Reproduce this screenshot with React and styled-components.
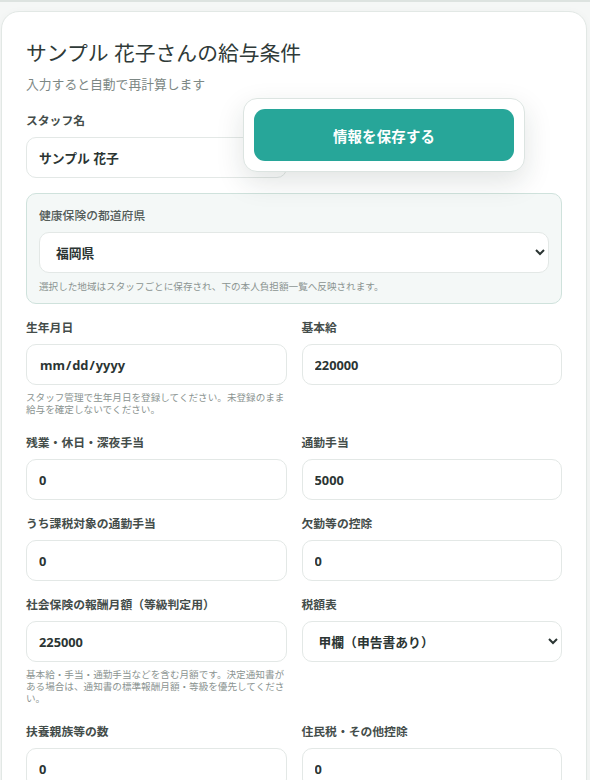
import React from "react";
import styled, { createGlobalStyle } from "styled-components";

const GlobalStyle = createGlobalStyle`
  html, body {
    margin: 0;
    padding: 0;
    background: #f5f7f6;
    font-family: "Noto Sans", "Noto Sans CJK JP", sans-serif;
    color: #2f3a38;
  }
  * { box-sizing: border-box; }
`;

const TopEdge = styled.div`
  height: 2px;
  background: #dde3e0;
`;

const Page = styled.div`
  padding: 9px 3px 0 1px;
`;

const Card = styled.section`
  background: #ffffff;
  border: 1px solid #e2e8e5;
  border-radius: 18px;
  padding: 28px 24px 40px;
  box-shadow: 0 2px 10px rgba(30, 60, 50, 0.04);
`;

const Title = styled.h2`
  margin: 0;
  font-size: 20.8px;
  line-height: 27px;
  font-weight: 400;
  color: #2f3a38;
`;

const Subtitle = styled.p`
  margin: 8px 0 0;
  font-size: 12.8px;
  line-height: 18px;
  color: #7c8784;
`;

const Grid = styled.div`
  display: grid;
  grid-template-columns: 1fr 1fr;
  column-gap: 15px;
  row-gap: 15px;
  margin-top: 19px;
`;

const Field = styled.div`
  display: flex;
  flex-direction: column;
  min-width: 0;
`;

const Label = styled.label`
  font-size: 11.8px;
  line-height: 17px;
  font-weight: ${(p) => (p.$light ? 500 : 700)};
  color: ${(p) => (p.$light ? "#535c59" : "#444d4a")};
  margin-bottom: 8px;
`;

const Input = styled.input`
  height: 41px;
  width: 100%;
  border: 1px solid #e3e8e6;
  border-radius: 10px;
  background: #ffffff;
  padding: 0 12px;
  font-family: inherit;
  font-size: 12.8px;
  font-weight: 700;
  color: #2b3533;
  outline: none;
  &::-webkit-calendar-picker-indicator {
    display: none;
  }
`;

const Select = styled.select`
  height: 41px;
  width: 100%;
  border: 1px solid #e3e8e6;
  border-radius: 10px;
  background-color: #ffffff;
  padding: 0 8px 0 12px;
  font-family: inherit;
  font-size: 12.8px;
  font-weight: 700;
  color: #2b3533;
  outline: none;
`;

const Help = styled.p`
  margin: ${(p) => (p.$boxed ? "8px 0 0" : "7px 0 3px")};
  font-size: 9.6px;
  line-height: 12px;
  color: #8b9491;
`;

const RegionBox = styled.div`
  grid-column: 1 / -1;
  display: flex;
  flex-direction: column;
  background: #f4f8f7;
  border: 1px solid #cfe2dc;
  border-radius: 10px;
  padding: 13px 12px 10px;
`;

const SaveBar = styled.div`
  position: fixed;
  left: 243px;
  top: 98px;
  width: 282px;
  padding: 10px;
  background: #ffffff;
  border: 1px solid #dce4e1;
  border-radius: 14px;
  box-shadow: 0 10px 28px rgba(20, 50, 40, 0.13);
`;

const SaveButton = styled.button`
  display: block;
  width: 100%;
  height: 52px;
  border: none;
  border-radius: 11px;
  background: #27a699;
  color: #ffffff;
  font-family: inherit;
  font-size: 14.4px;
  font-weight: 700;
  letter-spacing: 0.2px;
  cursor: pointer;
`;

const fields = [
  { label: "生年月日", type: "date", help: "スタッフ管理で生年月日を登録してください。未登録のまま給与を確定しないでください。" },
  { label: "基本給", value: "220000" },
  { label: "残業・休日・深夜手当", value: "0" },
  { label: "通勤手当", value: "5000" },
  { label: "うち課税対象の通勤手当", value: "0" },
  { label: "欠勤等の控除", value: "0" },
  {
    label: "社会保険の報酬月額（等級判定用）",
    value: "225000",
    help: "基本給・手当・通勤手当などを含む月額です。決定通知書がある場合は、通知書の標準報酬月額・等級を優先してください。",
  },
  { label: "税額表", select: ["甲欄（申告書あり）", "乙欄（申告書なし）"] },
  { label: "扶養親族等の数", value: "0" },
  { label: "住民税・その他控除", value: "0" },
];

export default function App() {
  return (
    <>
      <GlobalStyle />
      <TopEdge />
      <Page>
        <Card>
          <Title>サンプル 花子さんの給与条件</Title>
          <Subtitle>入力すると自動で再計算します</Subtitle>
          <Grid>
            <Field>
              <Label>スタッフ名</Label>
              <Input type="text" defaultValue="サンプル 花子" />
            </Field>
            <div />
            <RegionBox>
              <Label $light>健康保険の都道府県</Label>
              <Select defaultValue="福岡県">
                <option>東京都</option>
                <option>大阪府</option>
                <option>福岡県</option>
              </Select>
              <Help $boxed>選択した地域はスタッフごとに保存され、下の本人負担額一覧へ反映されます。</Help>
            </RegionBox>
            {fields.map((f) => (
              <Field key={f.label}>
                <Label>{f.label}</Label>
                {f.select ? (
                  <Select defaultValue={f.select[0]}>
                    {f.select.map((o) => (
                      <option key={o}>{o}</option>
                    ))}
                  </Select>
                ) : (
                  <Input type={f.type || "text"} defaultValue={f.value} />
                )}
                {f.help && <Help>{f.help}</Help>}
              </Field>
            ))}
          </Grid>
        </Card>
      </Page>
      <SaveBar>
        <SaveButton>情報を保存する</SaveButton>
      </SaveBar>
    </>
  );
}
